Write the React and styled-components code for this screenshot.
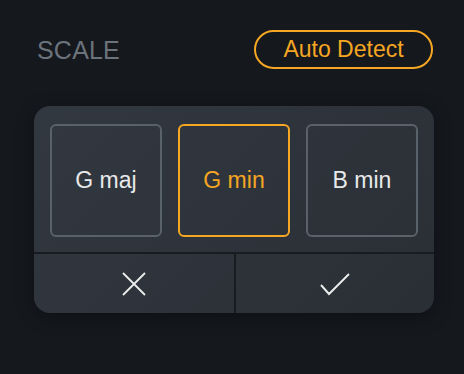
import React, { useState } from "react";
import styled, { createGlobalStyle } from "styled-components";

const GlobalStyle = createGlobalStyle`
  html, body {
    margin: 0;
    padding: 0;
    background: #15181d;
    font-family: "Liberation Sans", Arial, sans-serif;
  }
`;

const Page = styled.div`
  width: 464px;
  height: 374px;
  box-sizing: border-box;
  padding: 30px 31px 0 34px;
  background: #15181d;
`;

const Header = styled.div`
  display: flex;
  align-items: center;
  justify-content: space-between;
  height: 39px;
  padding-left: 3px;
`;

const Label = styled.span`
  font-size: 25px;
  color: #6b737c;
  letter-spacing: 0.2px;
  margin-top: 2px;
`;

const Pill = styled.button`
  height: 39px;
  width: 179px;
  box-sizing: border-box;
  border: 2px solid #f5a623;
  border-radius: 20px;
  background: transparent;
  color: #f5a623;
  font-family: inherit;
  font-size: 23px;
  padding: 0;
  cursor: pointer;
`;

const Card = styled.div`
  margin-top: 37px;
  width: 400px;
  border-radius: 16px;
  overflow: hidden;
  background: linear-gradient(135deg, #323840 0%, #2a2f36 100%);
  box-shadow: 0 4px 18px rgba(0, 0, 0, 0.35);
`;

const Options = styled.div`
  display: grid;
  grid-template-columns: repeat(3, 112px);
  gap: 16px;
  padding: 18px 16px 15px;
`;

const Option = styled.button`
  height: 113px;
  box-sizing: border-box;
  border: 2px solid ${(p) => (p.$active ? "#f5a623" : "#59616a")};
  border-radius: 6px;
  background: transparent;
  color: ${(p) => (p.$active ? "#f5a623" : "#e8e9ea")};
  font-family: inherit;
  font-size: 23px;
  padding: 0;
  cursor: pointer;
`;

const Actions = styled.div`
  display: grid;
  grid-template-columns: 200px 1fr;
  height: 59px;
  border-top: 2px solid #181b20;
`;

const Action = styled.button`
  display: flex;
  align-items: center;
  justify-content: center;
  background: transparent;
  border: none;
  border-left: ${(p) => (p.$divided ? "2px solid #181b20" : "none")};
  padding: 0;
  cursor: pointer;
  color: #eceded;
`;

const keys = ["G maj", "G min", "B min"];

export default function App() {
  const [selected, setSelected] = useState("G min");
  return (
    <>
      <GlobalStyle />
      <Page>
        <Header>
          <Label>SCALE</Label>
          <Pill>Auto Detect</Pill>
        </Header>
        <Card>
          <Options>
            {keys.map((k) => (
              <Option key={k} $active={k === selected} onClick={() => setSelected(k)}>
                {k}
              </Option>
            ))}
          </Options>
          <Actions>
            <Action aria-label="Cancel">
              <svg width="24" height="24" viewBox="0 0 24 24">
                <path d="M1 1 L23 23 M23 1 L1 23" stroke="currentColor" strokeWidth="1.8" fill="none" />
              </svg>
            </Action>
            <Action $divided aria-label="Confirm">
              <svg width="30" height="24" viewBox="0 0 30 24">
                <path d="M1 13 L9 22 L29 2" stroke="currentColor" strokeWidth="1.9" fill="none" />
              </svg>
            </Action>
          </Actions>
        </Card>
      </Page>
    </>
  );
}
